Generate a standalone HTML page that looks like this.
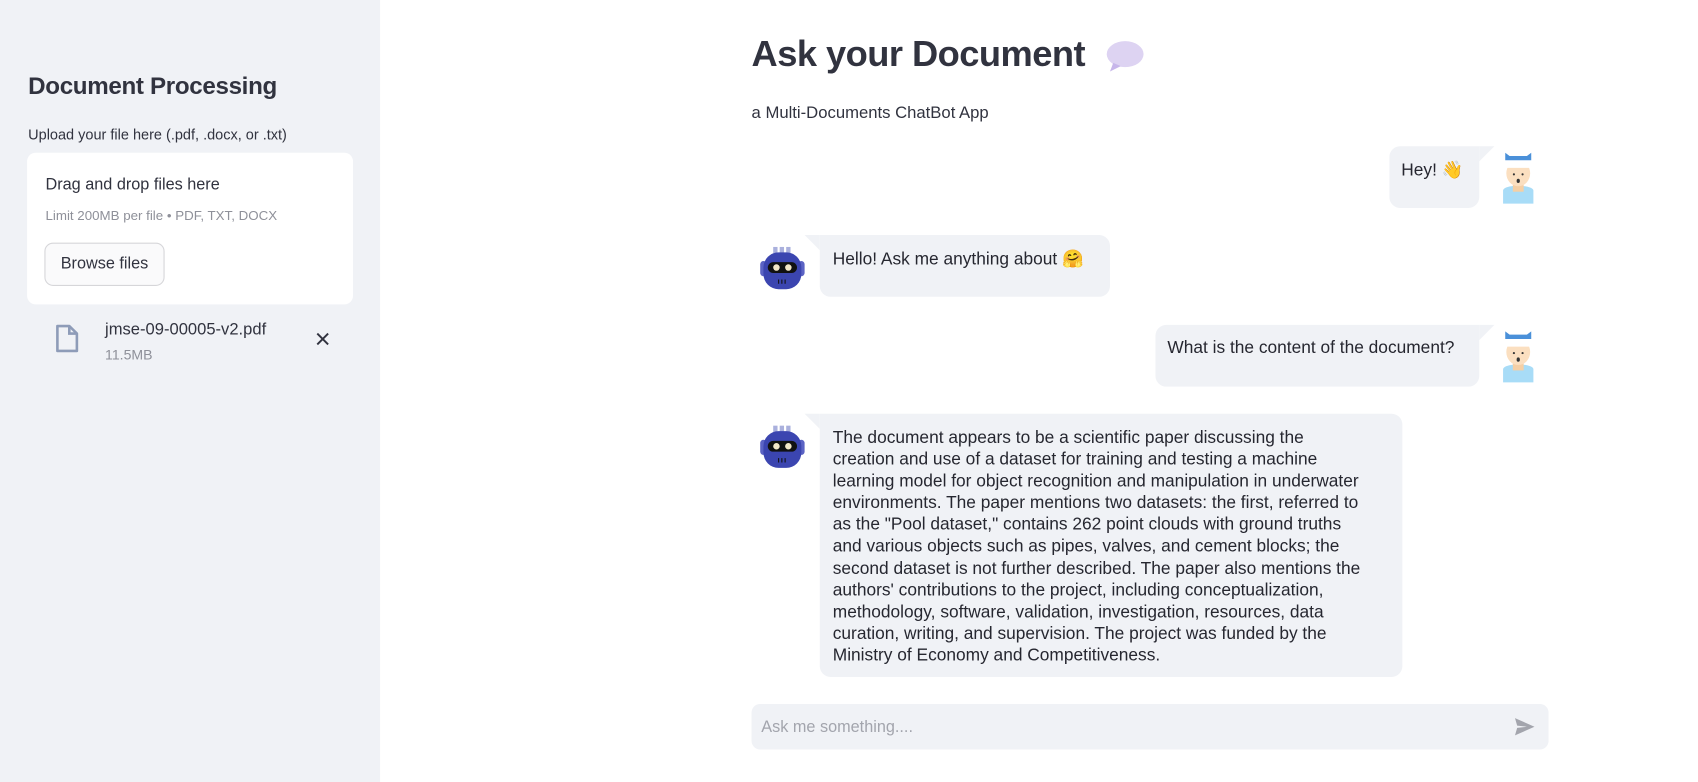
<!DOCTYPE html>
<html><head><meta charset="utf-8"><style>
html,body{margin:0;padding:0;width:1698px;height:782px;overflow:hidden;background:#fff}
#w{position:absolute;left:0;top:0;width:1568px;height:722px;transform:scale(1.08291,1.0831);transform-origin:0 0;font-family:"Liberation Sans",sans-serif;color:#31333f}
.a{position:absolute}
.sb{left:0;top:0;width:351px;height:722px;background:#f0f2f6}
.bub{position:absolute;background:#f0f2f6;border-radius:10px;font-size:16px;color:#262730;line-height:21.7px}
.tr{position:absolute;top:0;width:0;height:0}
</style></head><body><div id="w">
<div class="a sb"></div>
<div class="a" style="left:26px;top:67px;font-size:22.3px;font-weight:bold;letter-spacing:-0.3px">Document Processing</div>
<div class="a" style="left:26px;top:117px;font-size:13.4px">Upload your file here (.pdf, .docx, or .txt)</div>
<div class="a" style="left:25px;top:141px;width:301px;height:140px;background:#fff;border-radius:8px"></div>
<div class="a" style="left:42px;top:162px;font-size:15px">Drag and drop files here</div>
<div class="a" style="left:42px;top:192px;font-size:12.3px;color:#8e9099">Limit 200MB per file • PDF, TXT, DOCX</div>
<div class="a" style="left:41px;top:224px;width:111px;height:40px;border:1px solid #d6d6d9;border-radius:8px;background:#fafafb;font-size:15px;line-height:38px;text-align:center;box-sizing:border-box">Browse files</div>
<svg class="a" style="left:50px;top:299px" width="24" height="28" viewBox="0 0 24 28"><path d="M3 2h11l7 7v16H3z" fill="none" stroke="#8e9cb8" stroke-width="2.4" stroke-linejoin="round"/><path d="M14 2v7h7" fill="none" stroke="#8e9cb8" stroke-width="2.4"/></svg>
<div class="a" style="left:97px;top:296px;font-size:15.3px">jmse-09-00005-v2.pdf</div>
<div class="a" style="left:97px;top:320px;font-size:13px;color:#8e9099">11.5MB</div>
<svg class="a" style="left:291px;top:306px" width="14" height="14"><path d="M2 2L12 12M12 2L2 12" stroke="#31333f" stroke-width="1.8"/></svg>

<div class="a" style="left:694px;top:32px;font-size:33.5px;font-weight:bold;letter-spacing:-0.5px">Ask your Document</div>
<svg class="a" style="left:1020px;top:36px" width="38" height="32"><ellipse cx="19" cy="14" rx="17" ry="12" fill="#ddd3f2"/><path d="M8 22l-3 8 10-5z" fill="#c7b6ea"/></svg>
<div class="a" style="left:694px;top:96px;font-size:15.4px">a Multi-Documents ChatBot App</div>

<div class="bub" style="left:1283px;top:135px;width:83px;height:57px;border-top-right-radius:0"><div style="position:absolute;left:11px;top:12px">Hey! 👋</div></div>
<div class="tr" style="left:1366px;top:135px;border-left:14px solid #f0f2f6;border-bottom:14px solid transparent"></div>
<svg class="a" style="left:1382px;top:138px" width="40" height="52" viewBox="0 0 40 52"><path d="M6 38c0-6 28-6 28 0v12H6z" fill="#a8dcf7"/><rect x="15" y="30" width="10" height="9" fill="#f5cfa5"/><ellipse cx="20" cy="22" rx="11" ry="12" fill="#fbdfc0"/><path d="M8 8h24v9H8z" fill="#fff"/><path d="M8 3l4 3h16l4-3v7H8z" fill="#4a90d9"/><circle cx="16" cy="23" r="1" fill="#333"/><circle cx="24" cy="23" r="1" fill="#333"/><ellipse cx="20" cy="29" rx="1.5" ry="2" fill="#333"/></svg>

<svg class="a" style="left:700px;top:227px" width="46" height="42" viewBox="0 0 46 42"><rect x="14" y="1" width="4" height="6" fill="#aab0dd"/><rect x="20" y="1" width="4" height="6" fill="#aab0dd"/><rect x="26" y="1" width="4" height="6" fill="#aab0dd"/><rect x="2" y="14" width="6" height="14" rx="3" fill="#5b63c4"/><rect x="37" y="14" width="6" height="14" rx="3" fill="#5b63c4"/><rect x="5" y="6" width="35" height="34" rx="14" fill="#3b45b0"/><rect x="9" y="15" width="27" height="10" rx="5" fill="#111"/><circle cx="17" cy="20" r="3" fill="#f3e7c8"/><circle cx="28" cy="20" r="3" fill="#f3e7c8"/><path d="M19 31v4M22 31v4M25 31v4" stroke="#111" stroke-width="1"/></svg>
<div class="bub" style="left:757px;top:217px;width:268px;height:57px;border-top-left-radius:0"><div style="position:absolute;left:12px;top:12px">Hello! Ask me anything about 🤗</div></div>
<div class="tr" style="left:743px;top:217px;border-right:14px solid #f0f2f6;border-bottom:14px solid transparent"></div>

<div class="bub" style="left:1067px;top:300px;width:299px;height:57px;border-top-right-radius:0"><div style="position:absolute;left:11px;top:11px">What is the content of the document?</div></div>
<div class="tr" style="left:1366px;top:300px;border-left:14px solid #f0f2f6;border-bottom:14px solid transparent"></div>
<svg class="a" style="left:1382px;top:303px" width="40" height="52" viewBox="0 0 40 52"><path d="M6 38c0-6 28-6 28 0v12H6z" fill="#a8dcf7"/><rect x="15" y="30" width="10" height="9" fill="#f5cfa5"/><ellipse cx="20" cy="22" rx="11" ry="12" fill="#fbdfc0"/><path d="M8 8h24v9H8z" fill="#fff"/><path d="M8 3l4 3h16l4-3v7H8z" fill="#4a90d9"/><circle cx="16" cy="23" r="1" fill="#333"/><circle cx="24" cy="23" r="1" fill="#333"/><ellipse cx="20" cy="29" rx="1.5" ry="2" fill="#333"/></svg>

<svg class="a" style="left:700px;top:392px" width="46" height="42" viewBox="0 0 46 42"><rect x="14" y="1" width="4" height="6" fill="#aab0dd"/><rect x="20" y="1" width="4" height="6" fill="#aab0dd"/><rect x="26" y="1" width="4" height="6" fill="#aab0dd"/><rect x="2" y="14" width="6" height="14" rx="3" fill="#5b63c4"/><rect x="37" y="14" width="6" height="14" rx="3" fill="#5b63c4"/><rect x="5" y="6" width="35" height="34" rx="14" fill="#3b45b0"/><rect x="9" y="15" width="27" height="10" rx="5" fill="#111"/><circle cx="17" cy="20" r="3" fill="#f3e7c8"/><circle cx="28" cy="20" r="3" fill="#f3e7c8"/><path d="M19 31v4M22 31v4M25 31v4" stroke="#111" stroke-width="1"/></svg>
<div class="bub" style="left:757px;top:382px;width:538px;height:243px;border-top-left-radius:0;font-size:16px;line-height:20.1px"><div style="position:absolute;left:12px;top:13px;width:520px;white-space:nowrap">The document appears to be a scientific paper discussing the<br>creation and use of a dataset for training and testing a machine<br>learning model for object recognition and manipulation in underwater<br>environments. The paper mentions two datasets: the first, referred to<br>as the "Pool dataset," contains 262 point clouds with ground truths<br>and various objects such as pipes, valves, and cement blocks; the<br>second dataset is not further described. The paper also mentions the<br>authors' contributions to the project, including conceptualization,<br>methodology, software, validation, investigation, resources, data<br>curation, writing, and supervision. The project was funded by the<br>Ministry of Economy and Competitiveness.</div></div>
<div class="tr" style="left:743px;top:382px;border-right:14px solid #f0f2f6;border-bottom:14px solid transparent"></div>

<div class="a" style="left:694px;top:650px;width:736px;height:42px;background:#f0f2f6;border-radius:8px"></div>
<div class="a" style="left:703px;top:663px;font-size:15px;color:#a3a5ad">Ask me something....</div>
<svg class="a" style="left:1398px;top:662px" width="20" height="18" viewBox="0 0 20 18"><path d="M1 1l18 8-18 8 2-7 9-1-9-1z" fill="#a3a5ad"/></svg>
</div></body></html>
